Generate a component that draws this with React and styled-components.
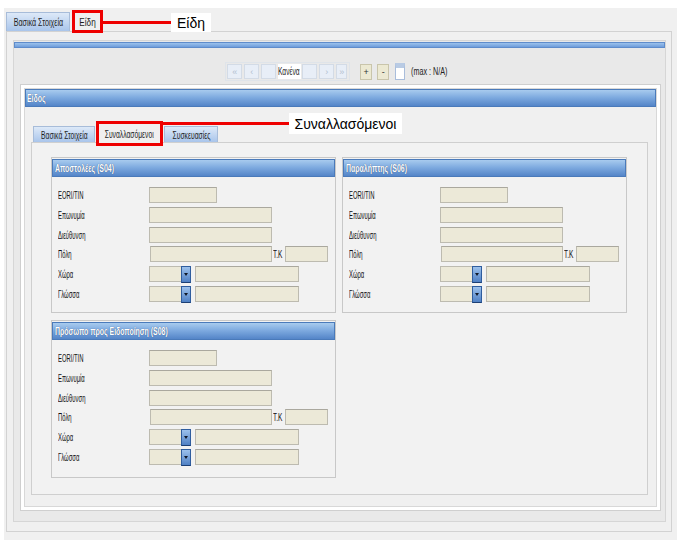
import React from 'react';
import styled, { createGlobalStyle } from 'styled-components';

const GlobalStyle = createGlobalStyle`
  html, body {
    margin: 0;
    padding: 0;
    background: #fff;
  }
  body {
    font-family: "Liberation Sans", Arial, sans-serif;
    color: #222;
  }
  * {
    box-sizing: border-box;
  }
`;

const Page = styled.div`
  padding: 8px 0 0 4px;
`;

const Screen = styled.div`
  width: 673px;
  height: 532px;
  background: #f0f0f0;
  padding: 2px 5px 8px 2px;
  display: flex;
  flex-direction: column;
`;

// squeezed text, the original UI font is very narrow
const Squeeze = styled.span`
  display: inline-block;
  white-space: nowrap;
  transform: scaleX(${({ $sx }) => $sx || 0.65});
  transform-origin: ${({ $origin }) => $origin || 'left'} center;
`;

const TabStrip = styled.div`
  display: flex;
  align-items: flex-end;
  gap: ${({ $gap }) => $gap}px;
  height: ${({ $h }) => $h}px;
  padding-left: ${({ $pl }) => $pl || 0}px;
  margin-top: ${({ $mt }) => $mt || 0}px;
  position: relative;
  z-index: 2;
`;

const Tab = styled.div`
  position: relative;
  width: ${({ $w }) => $w}px;
  height: ${({ $h }) => $h}px;
  display: flex;
  align-items: center;
  justify-content: center;
  font-size: 10.5px;
  color: #1f1f1f;
  border: 1px solid ${({ $active }) => ($active ? '#cdcdcd' : '#a7bcd9')};
  border-bottom: none;
  background: ${({ $active }) => ($active ? '#f0f0f0' : 'linear-gradient(#dde9f8, #a9c5eb)')};
  margin-bottom: ${({ $active }) => ($active ? -1 : 0)}px;
`;

const Highlight = styled.div`
  position: absolute;
  inset: ${({ $inset }) => $inset};
  border: 3px solid #ee0000;
  pointer-events: none;
`;

const Pointer = styled.div`
  position: absolute;
  left: calc(100% + ${({ $off }) => $off}px);
  top: ${({ $top }) => $top}px;
  width: ${({ $len }) => $len}px;
  height: 3px;
  background: #ee0000;
`;

const PointerLabel = styled.div`
  position: absolute;
  left: 100%;
  top: ${({ $h }) => 1.5 - $h / 2}px;
  width: ${({ $w }) => $w}px;
  height: ${({ $h }) => $h}px;
  background: #fff;
  display: flex;
  align-items: center;
  justify-content: center;
  font-family: "Liberation Sans", Arial, sans-serif;
  font-size: 14px;
  color: #000;
  white-space: nowrap;
`;

const OuterPanel = styled.div`
  flex: 1;
  border: 1px solid #d2d2d2;
  background: #f0f0f0;
  padding: 8px 5px 9px 6px;
  display: flex;
  flex-direction: column;
`;

const InnerPanel = styled.div`
  flex: 1;
  border: 1px solid #d6d6d6;
  background: #e9e9e9;
  padding-top: 1px;
  display: flex;
  flex-direction: column;
`;

const BlueBar = styled.div`
  height: 6px;
  border: 1px solid #5f8ccb;
  background: linear-gradient(#9cc2ec, #6f9ddb);
`;

const PagerRow = styled.div`
  display: flex;
  justify-content: center;
  align-items: center;
  gap: 5px;
  margin-top: 14px;
  height: 19px;
  padding-left: 8px;
  font-size: 10px;
`;

const NavGroup = styled.div`
  display: flex;
  align-items: center;
  gap: 1px;
  border: 1px solid #dfe4ea;
  padding: 1px;
  margin-right: 5px;
`;

const NavBtn = styled.div`
  width: ${({ $w }) => $w || 15}px;
  height: 15px;
  display: flex;
  align-items: center;
  justify-content: center;
  border: 1px solid #d3dbe6;
  background: #e8eef7;
  color: #b3bfcf;
  font-size: 9px;
  margin-right: 1px;
`;

const NavText = styled.div`
  width: 23px;
  height: 15px;
  background: #fff;
  display: flex;
  align-items: center;
  font-size: 10px;
  color: #222;
`;

const EditBtn = styled.div`
  width: 12px;
  height: 16px;
  display: flex;
  align-items: center;
  justify-content: center;
  border: 1px solid #c9c5ab;
  background: #ece9d2;
  color: #333;
  font-size: 9px;
`;

const MaxBox = styled.div`
  width: 10px;
  height: 17px;
  border: 1px solid #a9bddb;
  border-top: 5px solid #b9cbe4;
  background: #fff;
  margin-left: 1px;
`;

const MaxText = styled.span`
  color: #222;
  margin-left: 1px;
`;

const EidosPanel = styled.div`
  flex: 1;
  margin: 3px 4px 10px 6px;
  border: 1px solid #cfcfcf;
  background: #fff;
  padding: 3px;
  display: flex;
  flex-direction: column;
`;

const EidosInner = styled.div`
  flex: 1;
  border: 1px solid #d8d8d8;
  background: #f0f0f0;
  display: flex;
  flex-direction: column;
`;

const BlueHeader = styled.div`
  height: 18px;
  flex: none;
  display: flex;
  align-items: center;
  padding-left: ${({ $pl }) => $pl || 2}px;
  border: 1px solid #4a7aba;
  background: linear-gradient(#a8cbee 0%, #7fabe0 45%, #5485c8 100%);
  color: #fff;
  font-weight: bold;
  font-size: 10.5px;
  text-shadow: 0 0 1px rgba(10, 35, 80, 0.8);
`;

const ContentPanel = styled.div`
  flex: 1;
  margin: 0 8px 11px 6px;
  border: 1px solid #cfcfcf;
  background: #f2f2f2;
  padding: 14px 19px 0;
  display: grid;
  grid-template-columns: 285px 285px;
  grid-template-rows: 156px 158px;
  column-gap: 6px;
  row-gap: 7px;
  align-content: start;
`;

const Box = styled.div`
  border: 1px solid #c8c8c8;
  background: #f2f2f2;
  padding: 1px 0 0;
`;

const BoxBody = styled.div`
  display: grid;
  grid-template-columns: 91px auto;
  row-gap: 3.8px;
  align-items: center;
  padding: 10px 6px 10px;
`;

const Label = styled.span`
  display: inline-block;
  font-size: 10.5px;
  color: #111;
  white-space: nowrap;
  transform: scaleX(0.56);
  transform-origin: left center;
`;

const Inline = styled.div`
  display: flex;
  align-items: center;
`;

const Field = styled.div`
  width: ${({ $w }) => $w}px;
  height: 16px;
  margin-left: ${({ $ml }) => $ml || 0}px;
  background: #ece9d8;
  border: 1px solid #bdbbb0;
  border-top-color: #aaa89e;
`;

const TkLabel = styled.span`
  width: 13px;
  font-size: 10.5px;
  padding-left: 1px;
  color: #111;
`;

const Combo = styled.div`
  display: flex;
  width: 42px;
  height: 16px;
`;

const ComboValue = styled.div`
  flex: 1;
  background: #ece9d8;
  border: 1px solid #bdbbb0;
  border-right: none;
`;

const ComboButton = styled.div`
  width: 10px;
  height: 17px;
  display: flex;
  align-items: center;
  justify-content: center;
  border: 1px solid #2f5d9e;
  border-bottom-color: #1c3f74;
  background: linear-gradient(#9cc1ec, #4f80c4);

  &::after {
    content: '';
    border-left: 2.5px solid transparent;
    border-right: 2.5px solid transparent;
    border-top: 3px solid #111a2a;
  }
`;

const PartyBox = ({ title }) => (
  <Box>
    <BlueHeader>
      <Squeeze $sx={0.66}>{title}</Squeeze>
    </BlueHeader>
    <BoxBody>
      <Label>EORI/TIN</Label>
      <Field $w={68} />
      <Label>Επωνυμία</Label>
      <Field $w={123} />
      <Label>Διεύθυνση</Label>
      <Field $w={123} />
      <Label>Πόλη</Label>
      <Inline>
        <Field $w={122} $ml={1} />
        <TkLabel>
          <Squeeze $sx={0.62}>T.K</Squeeze>
        </TkLabel>
        <Field $w={43} />
      </Inline>
      <Label>Χώρα</Label>
      <Inline>
        <Combo>
          <ComboValue />
          <ComboButton />
        </Combo>
        <Field $w={104} $ml={4} />
      </Inline>
      <Label>Γλώσσα</Label>
      <Inline>
        <Combo>
          <ComboValue />
          <ComboButton />
        </Combo>
        <Field $w={104} $ml={4} />
      </Inline>
    </BoxBody>
  </Box>
);

const App = () => (
  <Page>
    <GlobalStyle />
    <Screen>
      <TabStrip $h={21} $gap={2}>
        <Tab $w={64} $h={19}>
          <Squeeze $sx={0.68} $origin="center">Βασικά Στοιχεία</Squeeze>
        </Tab>
        <Tab $w={31} $h={22} $active>
          <Squeeze $sx={0.78} $origin="center">Είδη</Squeeze>
          <Highlight $inset="-1px -1px -1px -1px" />
          <Pointer $off={1} $top={10} $len={68}>
            <PointerLabel $w={40} $h={19}>Είδη</PointerLabel>
          </Pointer>
        </Tab>
      </TabStrip>
      <OuterPanel>
        <InnerPanel>
          <BlueBar />
          <PagerRow>
            <NavGroup>
              <NavBtn>«</NavBtn>
              <NavBtn>‹</NavBtn>
              <NavBtn />
              <NavText>
                <Squeeze $sx={0.66}>Κανένα</Squeeze>
              </NavText>
              <NavBtn />
              <NavBtn>›</NavBtn>
              <NavBtn $w={11}>»</NavBtn>
            </NavGroup>
            <EditBtn>+</EditBtn>
            <EditBtn>-</EditBtn>
            <MaxBox />
            <MaxText>
              <Squeeze $sx={0.72}>(max : N/A)</Squeeze>
            </MaxText>
          </PagerRow>
          <EidosPanel>
            <EidosInner>
              <BlueHeader $pl={1}>
                <Squeeze $sx={0.66}>Είδος</Squeeze>
              </BlueHeader>
              <TabStrip $h={19} $gap={3} $pl={8} $mt={16}>
                <Tab $w={62} $h={16}>
                  <Squeeze $sx={0.64} $origin="center">Βασικά Στοιχεία</Squeeze>
                </Tab>
                <Tab $w={63} $h={20} $active>
                  <Squeeze $sx={0.64} $origin="center">Συναλλασόμενοι</Squeeze>
                  <Highlight $inset="-3px -3px -3px -3px" />
                  <Pointer $off={3} $top={-2} $len={126}>
                    <PointerLabel $w={113} $h={21}>Συναλλασόμενοι</PointerLabel>
                  </Pointer>
                </Tab>
                <Tab $w={54} $h={16}>
                  <Squeeze $sx={0.64} $origin="center">Συσκευασίες</Squeeze>
                </Tab>
              </TabStrip>
              <ContentPanel>
                <PartyBox title="Αποστολέες (S04)" />
                <PartyBox title="Παραλήπτης (S06)" />
                <PartyBox title="Πρόσωπο προς Ειδοποίηση (S08)" />
              </ContentPanel>
            </EidosInner>
          </EidosPanel>
        </InnerPanel>
      </OuterPanel>
    </Screen>
  </Page>
);

export default App;
